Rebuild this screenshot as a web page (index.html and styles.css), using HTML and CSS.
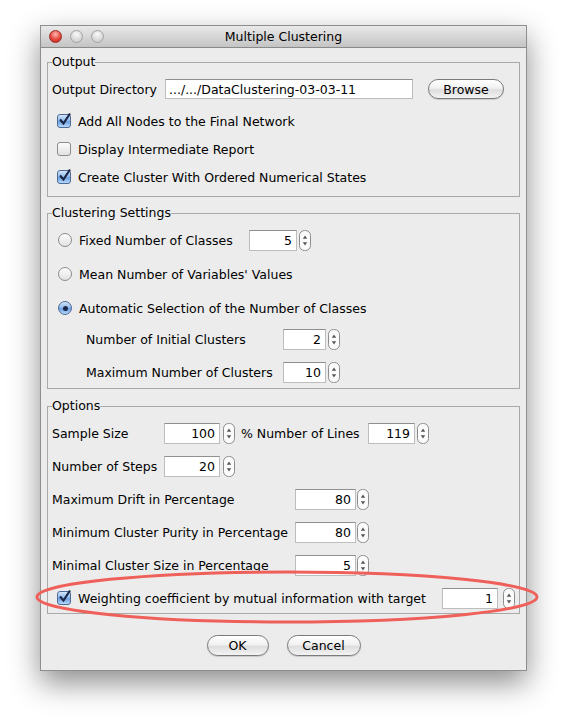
FILE: index.html
```html
<!DOCTYPE html>
<html lang="en">
<head>
    <meta charset="UTF-8">
    <title>Multiple Clustering</title>
    <link rel="stylesheet" href="styles.css">
</head>
<body>
<div class="window">
    <div class="titlebar">
        <span class="light red"></span>
        <span class="light"></span>
        <span class="light"></span>
        <span class="title">Multiple Clustering</span>
    </div>
    <div class="content">
        <fieldset class="box box-output">
            <legend>Output</legend>
            <div class="row">
                <span class="lbl w-dir">Output Directory</span>
                <span class="field f-dir">.../.../DataClustering-03-03-11</span>
                <span class="btn btn-browse">Browse</span>
            </div>
            <div class="group g-checks">
                <div class="row">
                    <span class="check on"><svg width="16" height="16" viewBox="0 0 16 16"><path d="M3 7.5 L6.5 11.5 L13 1.5" fill="none" stroke="#1b2747" stroke-width="2.2"/></svg></span>
                    <span class="lbl">Add All Nodes to the Final Network</span>
                </div>
                <div class="row">
                    <span class="check"></span>
                    <span class="lbl">Display Intermediate Report</span>
                </div>
                <div class="row">
                    <span class="check on"><svg width="16" height="16" viewBox="0 0 16 16"><path d="M3 7.5 L6.5 11.5 L13 1.5" fill="none" stroke="#1b2747" stroke-width="2.2"/></svg></span>
                    <span class="lbl">Create Cluster With Ordered Numerical States</span>
                </div>
            </div>
        </fieldset>

        <fieldset class="box box-cluster">
            <legend>Clustering Settings</legend>
            <div class="group g-radios">
                <div class="row">
                    <span class="radio"></span>
                    <span class="lbl w-fixed">Fixed Number of Classes</span>
                    <span class="num n-fixed">5</span>
                    <svg class="spin" width="12" height="21" viewBox="0 0 12 21"><rect x="0.5" y="0.5" width="11" height="20" rx="5" fill="#fbfbfb" stroke="#8c8c8c"/><path d="M6 5.5L8.2 8.8H3.8Z" fill="#555"/><path d="M6 15.5L8.2 12.2H3.8Z" fill="#555"/></svg>
                </div>
                <div class="row">
                    <span class="radio"></span>
                    <span class="lbl">Mean Number of Variables' Values</span>
                </div>
                <div class="row">
                    <span class="radio on"></span>
                    <span class="lbl">Automatic Selection of the Number of Classes</span>
                </div>
            </div>
            <div class="group g-sub">
                <div class="row">
                    <span class="lbl w-sub">Number of Initial Clusters</span>
                    <span class="num n-sub">2</span>
                    <svg class="spin" width="12" height="21" viewBox="0 0 12 21"><rect x="0.5" y="0.5" width="11" height="20" rx="5" fill="#fbfbfb" stroke="#8c8c8c"/><path d="M6 5.5L8.2 8.8H3.8Z" fill="#555"/><path d="M6 15.5L8.2 12.2H3.8Z" fill="#555"/></svg>
                </div>
                <div class="row">
                    <span class="lbl w-sub">Maximum Number of Clusters</span>
                    <span class="num n-sub">10</span>
                    <svg class="spin" width="12" height="21" viewBox="0 0 12 21"><rect x="0.5" y="0.5" width="11" height="20" rx="5" fill="#fbfbfb" stroke="#8c8c8c"/><path d="M6 5.5L8.2 8.8H3.8Z" fill="#555"/><path d="M6 15.5L8.2 12.2H3.8Z" fill="#555"/></svg>
                </div>
            </div>
        </fieldset>

        <fieldset class="box box-options">
            <legend>Options</legend>
            <div class="group g-options">
                <div class="row">
                    <span class="lbl w-short">Sample Size</span>
                    <span class="num n-short">100</span>
                    <svg class="spin s3" width="12" height="21" viewBox="0 0 12 21"><rect x="0.5" y="0.5" width="11" height="20" rx="5" fill="#fbfbfb" stroke="#8c8c8c"/><path d="M6 5.5L8.2 8.8H3.8Z" fill="#555"/><path d="M6 15.5L8.2 12.2H3.8Z" fill="#555"/></svg>
                    <span class="lbl w-lines">% Number of Lines</span>
                    <span class="num n-lines">119</span>
                    <svg class="spin" width="12" height="21" viewBox="0 0 12 21"><rect x="0.5" y="0.5" width="11" height="20" rx="5" fill="#fbfbfb" stroke="#8c8c8c"/><path d="M6 5.5L8.2 8.8H3.8Z" fill="#555"/><path d="M6 15.5L8.2 12.2H3.8Z" fill="#555"/></svg>
                </div>
                <div class="row">
                    <span class="lbl w-short">Number of Steps</span>
                    <span class="num n-short">20</span>
                    <svg class="spin s3" width="12" height="21" viewBox="0 0 12 21"><rect x="0.5" y="0.5" width="11" height="20" rx="5" fill="#fbfbfb" stroke="#8c8c8c"/><path d="M6 5.5L8.2 8.8H3.8Z" fill="#555"/><path d="M6 15.5L8.2 12.2H3.8Z" fill="#555"/></svg>
                </div>
                <div class="row">
                    <span class="lbl w-long">Maximum Drift in Percentage</span>
                    <span class="num n-long">80</span>
                    <svg class="spin s1" width="12" height="21" viewBox="0 0 12 21"><rect x="0.5" y="0.5" width="11" height="20" rx="5" fill="#fbfbfb" stroke="#8c8c8c"/><path d="M6 5.5L8.2 8.8H3.8Z" fill="#555"/><path d="M6 15.5L8.2 12.2H3.8Z" fill="#555"/></svg>
                </div>
                <div class="row">
                    <span class="lbl w-long">Minimum Cluster Purity in Percentage</span>
                    <span class="num n-long">80</span>
                    <svg class="spin s1" width="12" height="21" viewBox="0 0 12 21"><rect x="0.5" y="0.5" width="11" height="20" rx="5" fill="#fbfbfb" stroke="#8c8c8c"/><path d="M6 5.5L8.2 8.8H3.8Z" fill="#555"/><path d="M6 15.5L8.2 12.2H3.8Z" fill="#555"/></svg>
                </div>
                <div class="row">
                    <span class="lbl w-long">Minimal Cluster Size in Percentage</span>
                    <span class="num n-long">5</span>
                    <svg class="spin s1" width="12" height="21" viewBox="0 0 12 21"><rect x="0.5" y="0.5" width="11" height="20" rx="5" fill="#fbfbfb" stroke="#8c8c8c"/><path d="M6 5.5L8.2 8.8H3.8Z" fill="#555"/><path d="M6 15.5L8.2 12.2H3.8Z" fill="#555"/></svg>
                </div>
                <div class="row">
                    <span class="check on"><svg width="16" height="16" viewBox="0 0 16 16"><path d="M3 7.5 L6.5 11.5 L13 1.5" fill="none" stroke="#1b2747" stroke-width="2.2"/></svg></span>
                    <span class="lbl w-weight">Weighting coefficient by mutual information with target</span>
                    <span class="num n-weight">1</span>
                    <svg class="spin s5" width="12" height="21" viewBox="0 0 12 21"><rect x="0.5" y="0.5" width="11" height="20" rx="5" fill="#fbfbfb" stroke="#8c8c8c"/><path d="M6 5.5L8.2 8.8H3.8Z" fill="#555"/><path d="M6 15.5L8.2 12.2H3.8Z" fill="#555"/></svg>
                </div>
            </div>
        </fieldset>

        <div class="buttons">
            <span class="btn btn-ok">OK</span>
            <span class="btn btn-cancel">Cancel</span>
        </div>
    </div>
</div>

<!-- red ring drawn over the last option -->
<svg class="mark" width="567" height="726" viewBox="0 0 567 726">
    <ellipse cx="287" cy="597" rx="250" ry="25" fill="none" stroke="#f0605a" stroke-width="3"/>
</svg>
</body>
</html>
```

FILE: styles.css
```css
*{
    margin: 0;
    padding: 0;
    box-sizing: border-box;
}
body{
    background: #fff;
    font-family: "DejaVu Sans", sans-serif;
    font-size: 12.5px;
    color: #000;
    width: 567px;
    height: 726px;
    position: relative;
    overflow: hidden;
}
.window{
    width: 487px;
    margin: 25px 0 0 40px;
    border: 1px solid #8e8e8e;
    background: #ececec;
    box-shadow: 0 12px 28px rgba(0,0,0,0.45);
}
.titlebar{
    height: 22px;
    border-bottom: 1px solid #8a8a8a;
    background: linear-gradient(#e9e9e9, #c4c4c4);
    display: flex;
    align-items: center;
    padding-left: 8px;
    gap: 8px;
    position: relative;
}
.light{
    width: 13px;
    height: 13px;
    border-radius: 50%;
    border: 1px solid #a2a2a2;
    background: radial-gradient(circle at 50% 30%, #fafafa, #d8d8d8 60%, #c6c6c6);
}
.light.red{
    border-color: #9c2b25;
    background: radial-gradient(circle at 50% 30%, #ffb7b0, #e5473d 55%, #b8221a);
}
.title{
    position: absolute;
    left: 0;
    right: 0;
    text-align: center;
    pointer-events: none;
}
.content{
    padding: 6px 6px 14px 6px;
}
.box{
    border: 1px solid #a9a9a9;
    padding: 0 4px;
}
.box legend{
    line-height: 16px;
    padding: 0;
}
.box-output{
    padding-top: 5px;
    padding-bottom: 5px;
}
.box-cluster{
    margin-top: 8px;
    padding-top: 5px;
    padding-bottom: 2px;
}
.box-options{
    margin-top: 9px;
    padding-top: 5px;
    padding-bottom: 1px;
}
.row{
    display: flex;
    align-items: center;
    height: 28px;
    white-space: nowrap;
}
.group{
    display: flex;
    flex-direction: column;
}
.g-checks{
    margin-top: 4px;
}
.g-radios{
    gap: 6px;
}
.g-sub{
    margin-top: 3px;
    gap: 5px;
}
.g-options{
    gap: 5px;
}

/* labels */
.w-dir{ width: 113px; }
.w-fixed{ width: 170px; }
.w-sub{ width: 197px; margin-left: 34px; }
.w-short{ width: 112px; }
.w-lines{ width: 127px; margin-left: 6px; }
.w-long{ width: 243px; }
.w-weight{ width: 364px; }
.check + .lbl,
.radio + .lbl{
    margin-left: 7px;
}

/* text fields */
.field,
.num{
    height: 21px;
    background: #fff;
    border: 1px solid #bdbdbd;
    border-top-color: #8f8f8f;
    line-height: 19px;
}
.field{
    padding-left: 3px;
}
.num{
    text-align: right;
    padding-right: 4px;
}
.f-dir{ width: 248px; height: 20px; }
.n-fixed{ width: 48px; }
.n-sub{ width: 43px; }
.n-short{ width: 56px; }
.n-lines{ width: 47px; }
.n-long{ width: 61px; }
.n-weight{ width: 56px; }
.spin{
    margin-left: 2px;
    flex-shrink: 0;
}
.spin.s1{ margin-left: 1px; }
.spin.s3{ margin-left: 3px; }
.spin.s5{ margin-left: 5px; }

/* check boxes and radio buttons */
.check{
    width: 14px;
    height: 14px;
    margin-left: 5px;
    border: 1px solid #8c8c8c;
    border-radius: 3px;
    background: linear-gradient(#fdfdfd, #e2e2e2);
    position: relative;
    flex-shrink: 0;
}
.check.on{
    border-color: #4d6a96;
    background: linear-gradient(#d3e6fc, #8ab6ea 50%, #6b9fe0 55%, #b7d9fb);
}
.check svg{
    position: absolute;
    left: -1px;
    top: -3px;
}
.radio{
    width: 14px;
    height: 14px;
    margin-left: 6px;
    border-radius: 50%;
    border: 1px solid #8c8c8c;
    background: linear-gradient(#fdfdfd, #e2e2e2);
    position: relative;
    flex-shrink: 0;
}
.radio.on{
    border-color: #4d6a96;
    background: linear-gradient(#d3e6fc, #8ab6ea 50%, #6b9fe0 55%, #b7d9fb);
}
.radio.on::after{
    content: "";
    position: absolute;
    left: 3.5px;
    top: 3.5px;
    width: 5px;
    height: 5px;
    border-radius: 50%;
    background: #1b2747;
}

/* buttons */
.btn{
    height: 21px;
    border: 1px solid #7a7a7a;
    border-radius: 11px;
    background: linear-gradient(#ffffff, #f1f1f1 45%, #dedede 55%, #f3f3f3);
    box-shadow: 0 1px 1px rgba(0,0,0,0.15);
    display: flex;
    align-items: center;
    justify-content: center;
}
.btn-browse{
    width: 76px;
    height: 20px;
    margin-left: 15px;
}
.buttons{
    display: flex;
    justify-content: center;
    gap: 18px;
    margin-top: 21px;
}
.btn-ok{ width: 62px; }
.btn-cancel{ width: 74px; }

.mark{
    position: absolute;
    left: 0;
    top: 0;
    pointer-events: none;
}
```
